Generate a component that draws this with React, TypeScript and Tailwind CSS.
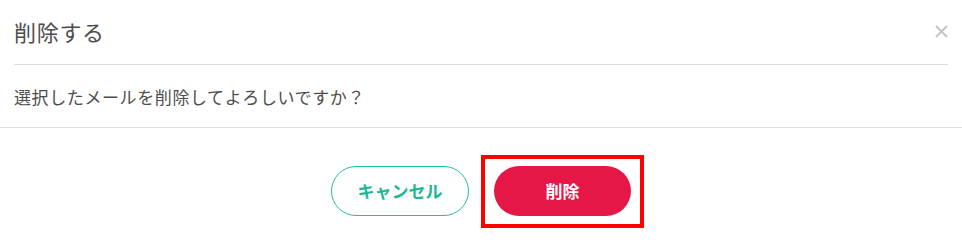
import React from "react";

export default function App() {
  return (
    <div
      className="w-[962px] h-[246px] bg-white text-[#4d4d4d]"
      style={{ fontFamily: '"Noto Sans CJK JP", "Noto Sans", sans-serif' }}
    >
      <div className="mx-[14px] h-[65px] border-b border-[#dcdcdc] flex items-center justify-between">
        <h2 className="text-[22px] leading-none tracking-[0.7px] pb-[2px]">削除する</h2>
        <button className="w-[14px] h-[14px] flex items-center justify-center mb-[2px]" aria-label="閉じる">
          <svg width="13" height="13" viewBox="0 0 13 13">
            <path d="M1 1L12 12M12 1L1 12" stroke="#c2c2c2" strokeWidth="1.8" />
          </svg>
        </button>
      </div>
      <div className="h-[63px] px-[14px] flex items-center border-b border-[#e3e3e3]">
        <p className="text-[17px] leading-none tracking-[0.6px] pt-[1px]">選択したメールを削除してよろしいですか？</p>
      </div>
      <div className="flex justify-center gap-[25px] pt-[38px]">
        <button className="w-[138px] h-[50px] rounded-full border border-[#22bf9c] text-[#1db893] text-[17px] font-bold bg-white">
          キャンセル
        </button>
        <div className="relative">
          <button className="w-[137px] h-[50px] rounded-full bg-[#e51747] text-white text-[17px] font-bold">
            削除
          </button>
          <span className="absolute -left-[13px] -right-[13px] -top-[11px] -bottom-[12px] border-4 border-[#ff0000] pointer-events-none" />
        </div>
      </div>
    </div>
  );
}
